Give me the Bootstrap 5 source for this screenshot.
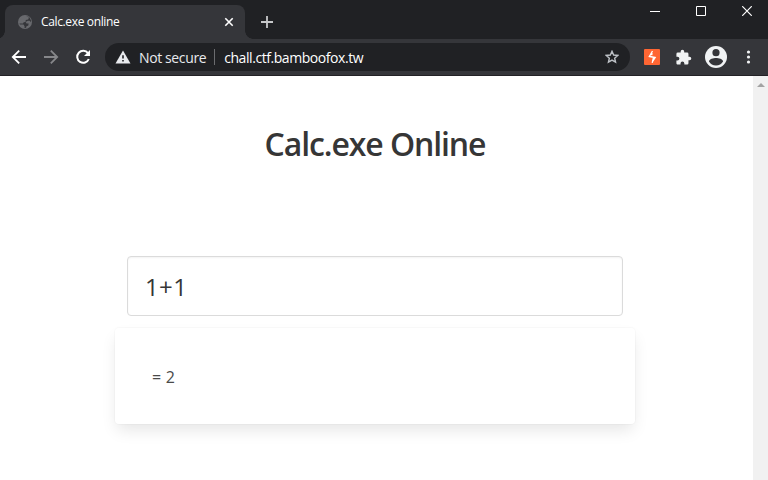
<!DOCTYPE html>
<html lang="en">
<head>
<meta charset="utf-8">
<meta name="viewport" content="width=device-width, initial-scale=1">
<title>Calc.exe online</title>
<link href="https://cdn.jsdelivr.net/npm/bootstrap@5.3.0/dist/css/bootstrap.min.css" rel="stylesheet">
<style>
body { height: 480px; font-family: "Open Sans", "Noto Sans", sans-serif; color: #363636; }
svg { display: block; flex: none; }
.tabstrip { height: 39px; background: #202124; padding-left: 5px; }
.browser-tab { position: relative; width: 240px; height: 34px; margin-top: 5px; padding: 0 11px 0 12px; background: #35363a; border-radius: 8px 8px 0 0; color: #fff; }
.browser-tab::before, .browser-tab::after { content: ""; position: absolute; bottom: 0; width: 8px; height: 8px; }
.browser-tab::before { left: -8px; background: radial-gradient(circle at 0 0, transparent 7.5px, #35363a 8px); }
.browser-tab::after { right: -8px; background: radial-gradient(circle at 100% 0, transparent 7.5px, #35363a 8px); }
.tab-title { font-size: 12px; line-height: 16px; margin-left: 8px; letter-spacing: -.36px; white-space: nowrap; }
.new-tab { margin: 16px 0 0 16px; }
.window-buttons { padding: 6px 16px 0 0; gap: 36px; }
.toolbar { height: 37px; background: #35363a; border-bottom: 1px solid #232226; padding: 0 12px 0 11px; }
.nav-gap { margin-left: 16px; }
.omnibox { width: 525px; height: 28px; margin-left: 13px; padding: 0 11px 0 10px; background: #202124; border-radius: 14px; font-size: 14px; color: #e8eaed; white-space: nowrap; }
.security { letter-spacing: -.38px; margin-left: 8px; }
.divider { width: 1px; height: 16px; background: #6b6c6f; }
.address { color: #fff; letter-spacing: -.44px; margin-left: 9px; }
main { padding-right: 3px; }
.page-title { font-size: 32px; line-height: 36px; font-weight: 600; margin: 50px 0 94px; letter-spacing: -1.1px; }
.calc { width: 520px; }
.expression { width: 496px; height: 60px; padding: 2px 17px 0; border: 1px solid #dbdbdb; border-radius: 4px; box-shadow: inset 0 1px 2px rgba(10,10,10,.05); font-size: 24px; letter-spacing: .4px; color: #363636; }
.result { height: 96px; margin-top: 12px; padding: 1px 37px 0; border-radius: 4px; box-shadow: 0 8px 16px -2px rgba(10,10,10,.1), 0 0 0 1px rgba(10,10,10,.02); font-size: 16px; letter-spacing: .2px; color: #4a4a4a; }
.scroll-track { width: 15px; background: #f1f1f1; padding: 7px 0 0 4px; }
</style>
<script src="https://cdn.jsdelivr.net/npm/bootstrap@5.3.0/dist/js/bootstrap.bundle.min.js"></script>
</head>
<body class="d-flex flex-column overflow-hidden bg-white">
<header class="flex-shrink-0">
  <div class="tabstrip d-flex align-items-start">
    <div class="browser-tab d-flex align-items-center">
      <svg width="16" height="16" viewBox="0 0 16 16"><circle cx="8" cy="8" r="7" fill="#68696d"/><path d="M9 2l3 1.400-.8 2-2.400.6-.3 2-1.800.2-.7 1.200H2.400L3 10.600h3.500l1.200 1.800-.4 1.400 1.700.2.5-1.800 1.800-.8.3-2H9.500L8.700 8l2-1.200 2-.1 1.200 1.500.1-1.700-1.800-3.400z" fill="#35363a"/></svg>
      <span class="tab-title">Calc.exe online</span>
      <svg class="ms-auto" width="10" height="10" viewBox="0 0 10 10"><path d="M1.300 1.300l7.400 7.400M8.700 1.300L1.300 8.700" stroke="#fff" stroke-width="1.600"/></svg>
    </div>
    <svg class="new-tab" width="12" height="12" viewBox="0 0 12 12"><path d="M0 6h12M6 0v12" stroke="#c7c8ca" stroke-width="1.800"/></svg>
    <div class="window-buttons ms-auto d-flex">
      <svg width="10" height="10" viewBox="0 0 10 10"><path d="M0 5.500h10" stroke="#fff"/></svg>
      <svg width="10" height="10" viewBox="0 0 10 10"><path d="M.5.5h9v9h-9z" fill="none" stroke="#fff"/></svg>
      <svg width="10" height="10" viewBox="0 0 10 10"><path d="M.2.2l9.600 9.600M9.800.2L.2 9.800" stroke="#fff" stroke-width="1.200"/></svg>
    </div>
  </div>
  <div class="toolbar d-flex align-items-center">
    <svg width="16" height="16" viewBox="0 0 16 16"><path d="M15 8H2M8.200 1.600L1.800 8l6.400 6.400" fill="none" stroke="#fff" stroke-width="1.800"/></svg>
    <svg class="nav-gap" width="16" height="16" viewBox="0 0 16 16"><path d="M1 8h13M7.800 1.600L14.200 8l-6.400 6.400" fill="none" stroke="#86878a" stroke-width="1.800"/></svg>
    <svg class="nav-gap" width="17" height="16" viewBox="0 0 17 16"><path d="M13 4.200A6 6 0 1 0 13.800 10" fill="none" stroke="#fff" stroke-width="2"/><path d="M15 1v6H9z" fill="#fff"/></svg>
    <div class="omnibox d-flex align-items-center">
      <svg width="16" height="14" viewBox="0 0 16 14"><path d="M8 .5L15.500 13.500H.5z" fill="#e8eaed"/><path d="M7.200 5.200h1.600v3.300H7.200zM7.200 10h1.600v1.600H7.200z" fill="#202124"/></svg>
      <span class="security">Not secure</span>
      <span class="divider ms-2"></span>
      <span class="address">chall.ctf.bamboofox.tw</span>
      <svg class="ms-auto" width="14" height="14" viewBox="0 0 14 14"><path d="M7 1.300l1.650 3.750 4.100.4-3.100 2.700.9 4L7 10.050 3.450 12.150l.9-4-3.100-2.700 4.100-.4z" fill="none" stroke="#bdc1c6" stroke-width="1.400"/></svg>
    </div>
    <svg style="margin-left:14px" width="16" height="16" viewBox="0 0 16 16"><rect width="16" height="16" rx="1" fill="#ff6633"/><path d="M8.500 2L5.300 7.600l4.200.8-1.300 5.400M8 2.500l-.2 3.700M6 7.400l5.200 1L8.300 13" fill="none" stroke="#fff" stroke-width="1.300"/></svg>
    <svg style="margin-left:15px" width="17" height="17" viewBox="0 0 24 24"><path d="M20.500 11H19V7a2 2 0 0 0-2-2h-4V3.500a2.500 2.500 0 0 0-5 0V5H4a2 2 0 0 0-2 2v3.800h1.500a2.700 2.700 0 0 1 0 5.400H2V20c0 1.100.9 2 2 2h3.800v-1.500a2.700 2.700 0 0 1 5.400 0V22H17a2 2 0 0 0 2-2v-4h1.500a2.500 2.500 0 0 0 0-5z" fill="#f1f3f4"/></svg>
    <svg style="margin-left:13px" width="22" height="22" viewBox="0 0 22 22"><circle cx="11" cy="11" r="11" fill="#f1f3f4"/><circle cx="11" cy="6.700" r="3.600" fill="#35363a"/><path d="M4 15.400c0-2.200 4.500-3.400 7-3.400s7 1.200 7 3.400a8 8 0 0 1-14 0z" fill="#35363a"/></svg>
    <svg class="ms-auto" width="16" height="14" viewBox="0 0 16 14"><g fill="#f1f3f4"><circle cx="8.500" cy="2" r="1.600"/><circle cx="8.500" cy="7" r="1.600"/><circle cx="8.500" cy="12" r="1.600"/></g></svg>
  </div>
</header>
<div class="d-flex flex-grow-1">
  <main class="flex-grow-1 d-flex flex-column align-items-center">
    <h1 class="page-title">Calc.exe Online</h1>
    <div class="calc">
      <div class="expression mx-auto d-flex align-items-center">1+1</div>
      <div class="result bg-white d-flex align-items-center">= 2</div>
    </div>
  </main>
  <div class="scroll-track flex-shrink-0"><svg width="8" height="4" viewBox="0 0 8 4"><path d="M0 4l4-4 4 4z" fill="#a3a3a3"/></svg></div>
</div>
</body>
</html>
